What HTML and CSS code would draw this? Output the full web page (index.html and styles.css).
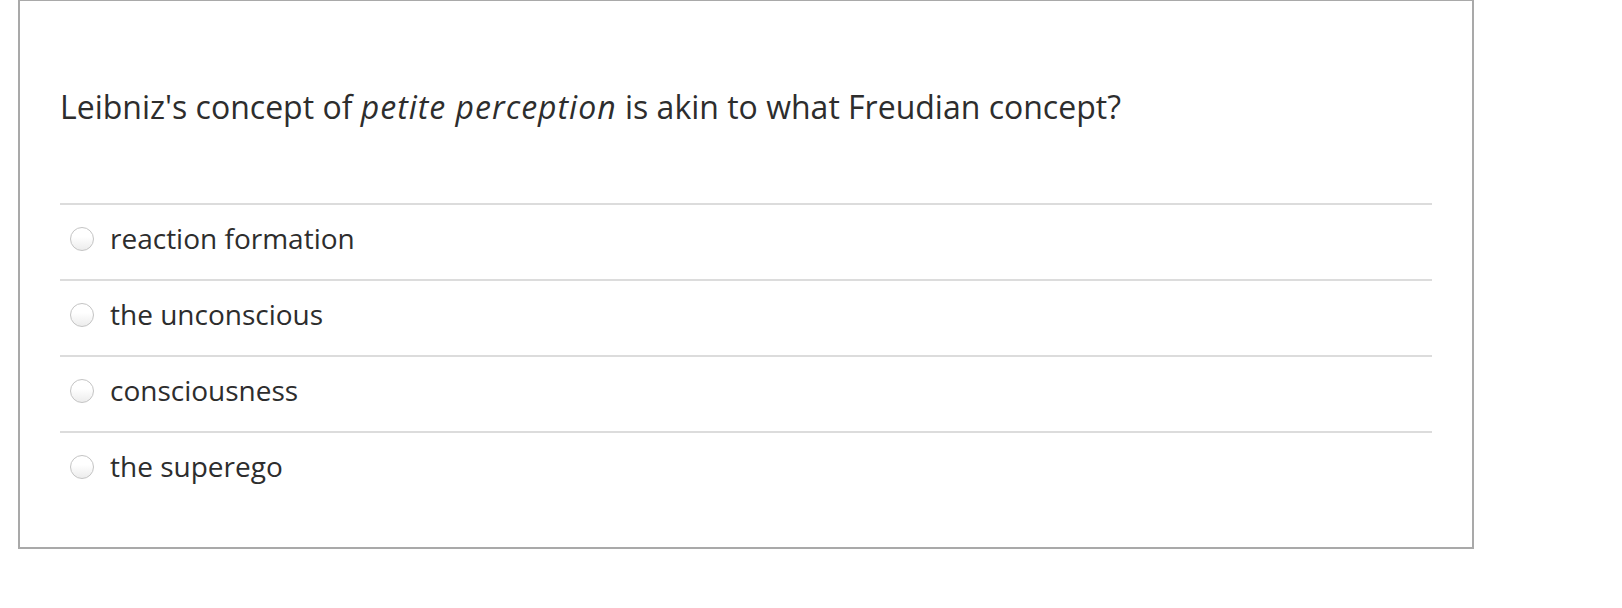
FILE: index.html
```html
<!DOCTYPE html>
<html lang="en">
<head>
<meta charset="utf-8">
<title>Question</title>
<link rel="stylesheet" href="styles.css">
</head>
<body>
<div class="card">
  <p class="question">Leibniz's concept of <em>petite perception</em> is akin to what Freudian concept?</p>
  <ul class="choices">
    <li class="choice"><span class="radio"></span><span class="label">reaction formation</span></li>
    <li class="choice"><span class="radio"></span><span class="label">the unconscious</span></li>
    <li class="choice"><span class="radio"></span><span class="label">consciousness</span></li>
    <li class="choice"><span class="radio"></span><span class="label">the superego</span></li>
  </ul>
</div>
</body>
</html>
```

FILE: styles.css
```css
html, body {
  margin: 0;
  padding: 0;
  background: #fff;
}
body {
  font-family: "Open Sans", "Liberation Sans", sans-serif;
  color: #2d2d2d;
}
.card {
  box-sizing: border-box;
  width: 1456px;
  height: 549px;
  margin-left: 18px;
  border: 2px solid #a9a9a9;
  border-top-width: 1px;
  padding: 0 40px;
}
.question {
  margin: 0;
  padding-top: 84px;
  font-size: 32px;
  line-height: 44px;
  height: 44px;
  margin-bottom: 74px;
}
.question em {
  font-style: italic;
  letter-spacing: 1px;
}
.choices {
  list-style: none;
  margin: 0;
  padding: 0;
}
.choice {
  box-sizing: border-box;
  display: flex;
  align-items: center;
  height: 76px;
  border-top: 2px solid #dcdcdc;
  padding: 0 0 7px 10px;
}
.radio {
  box-sizing: border-box;
  width: 24px;
  height: 24px;
  border-radius: 50%;
  border: 1px solid #c4c4c4;
  background: linear-gradient(#ffffff 40%, #ececec);
  margin-right: 16px;
  flex: none;
}
.label {
  font-size: 28px;
  line-height: 38px;
  padding-bottom: 2px;
}
```
